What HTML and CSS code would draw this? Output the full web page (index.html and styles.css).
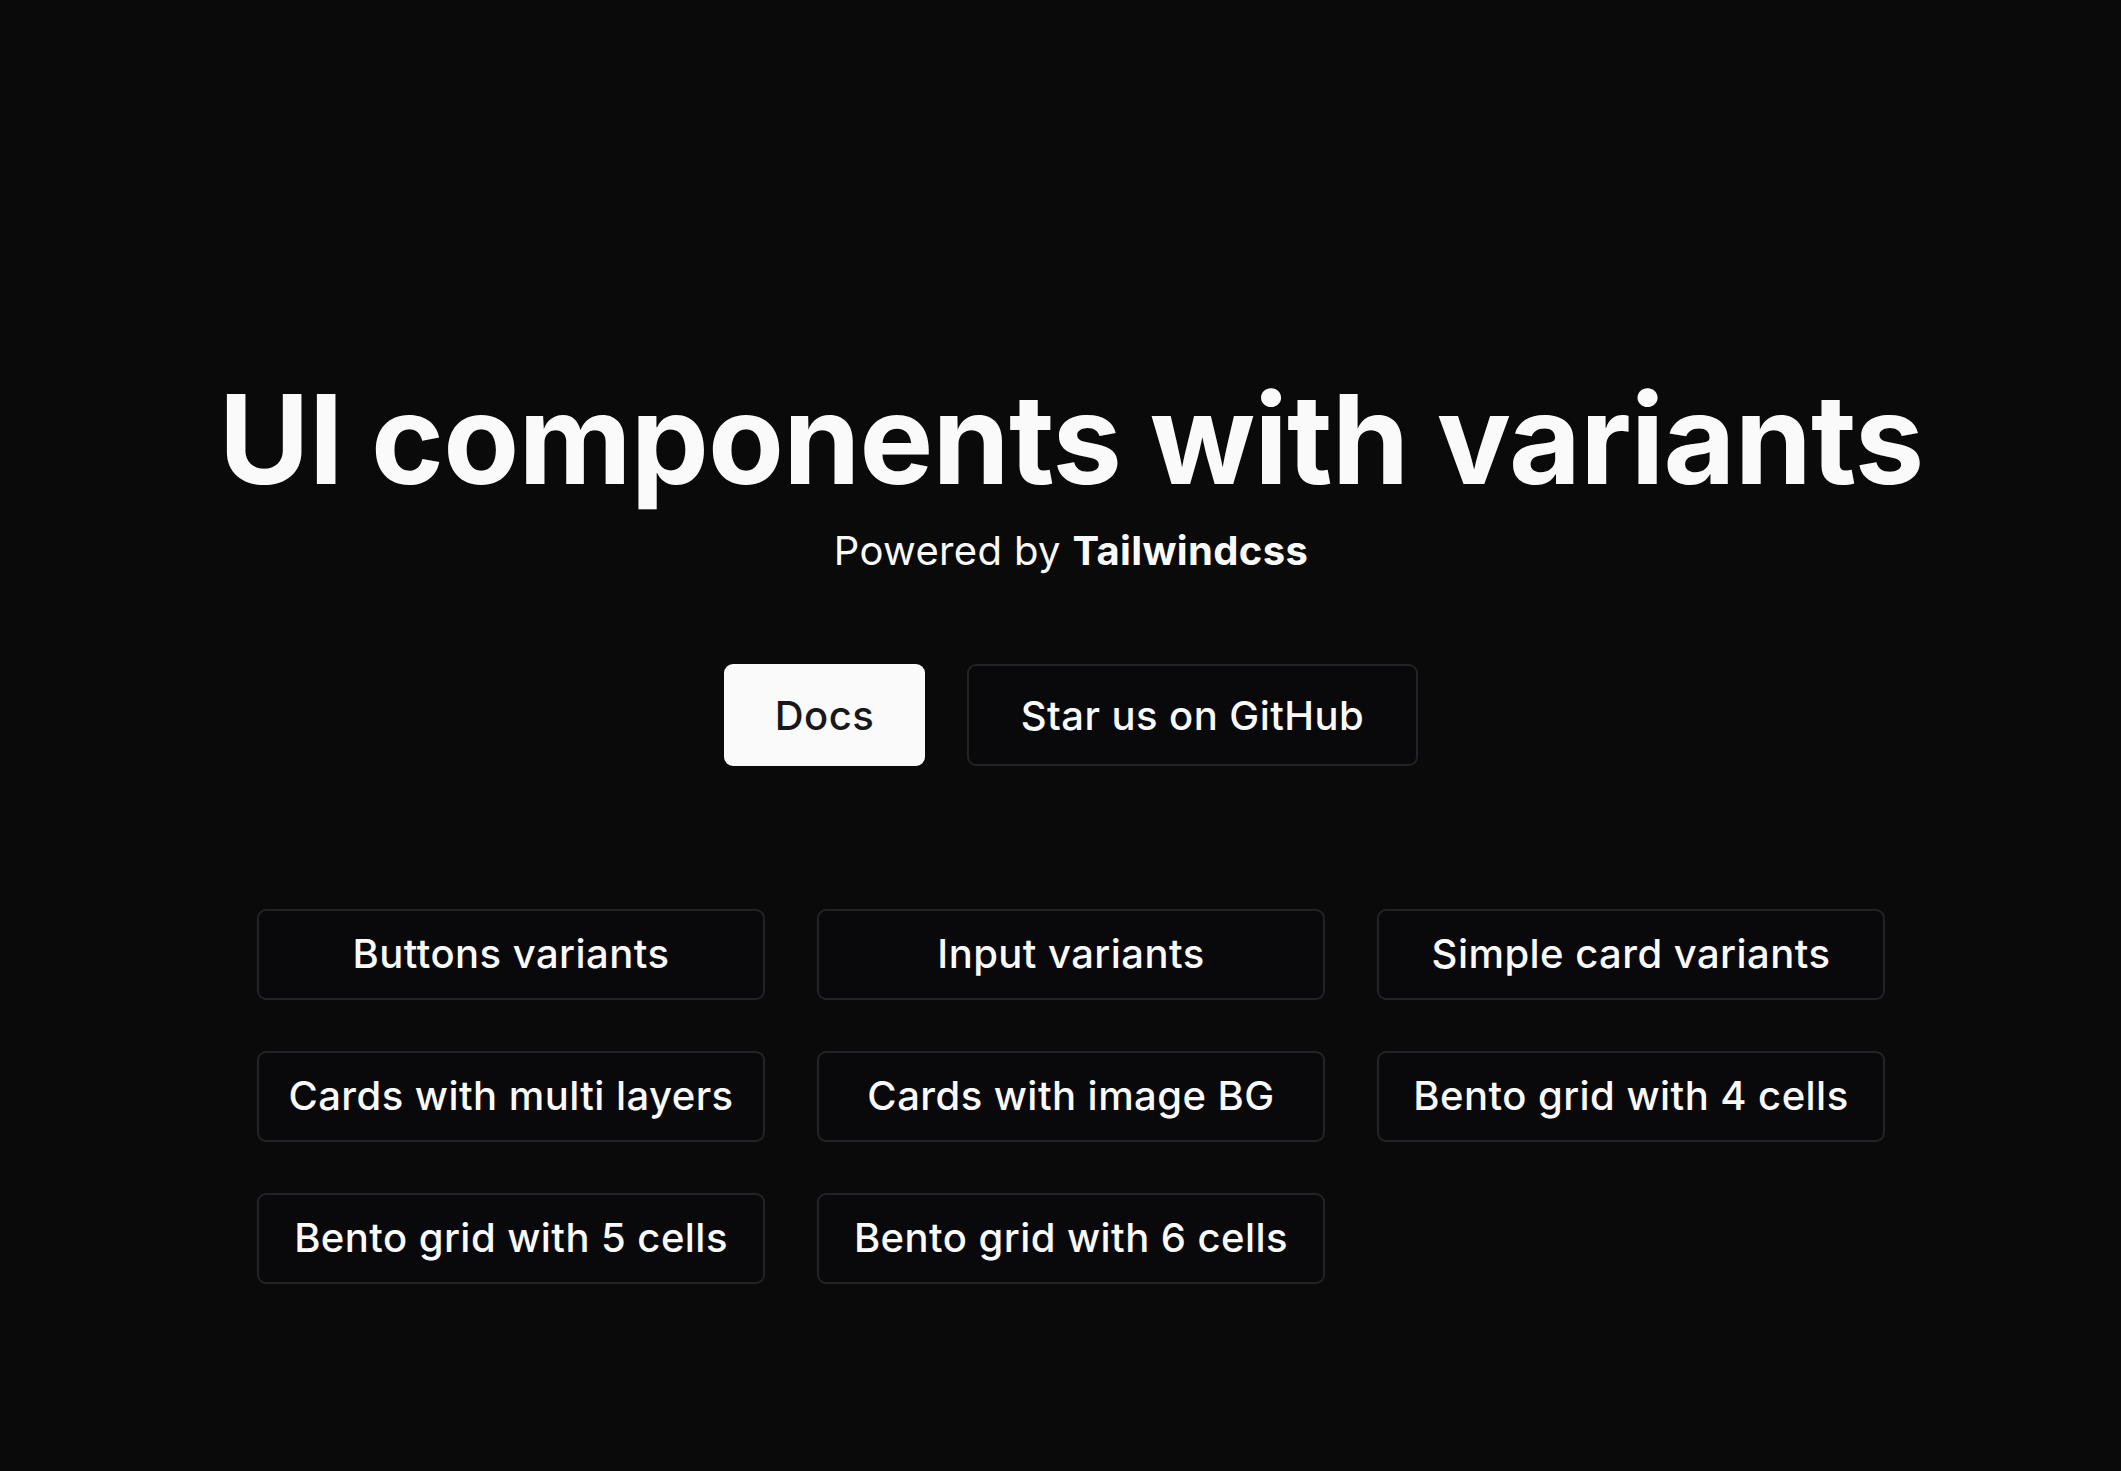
FILE: index.html
```html
<!DOCTYPE html>
<html lang="en">
<head>
<meta charset="utf-8">
<title>UI components with variants</title>
<link rel="stylesheet" href="styles.css">
</head>
<body>
<main class="hero">
  <h1 class="title">UI components with variants</h1>
  <p class="subtitle">Powered by <strong>Tailwindcss</strong></p>
  <div class="actions">
    <a class="btn btn-primary" href="#">Docs</a>
    <a class="btn btn-outline" href="#">Star us on GitHub</a>
  </div>
  <nav class="grid">
    <a class="card" href="#">Buttons variants</a>
    <a class="card" href="#">Input variants</a>
    <a class="card" href="#">Simple card variants</a>
    <a class="card" href="#">Cards with multi layers</a>
    <a class="card" href="#">Cards with image BG</a>
    <a class="card" href="#">Bento grid with 4 cells</a>
    <a class="card" href="#">Bento grid with 5 cells</a>
    <a class="card" href="#">Bento grid with 6 cells</a>
  </nav>
</main>
</body>
</html>
```

FILE: styles.css
```css
html, body {
  margin: 0;
  padding: 0;
  background: #0a0a0a;
  color: #fafafa;
  font-family: Inter, "Noto Sans", "Liberation Sans", sans-serif;
}

.hero {
  min-height: 100vh;
  box-sizing: border-box;
  display: flex;
  flex-direction: column;
  align-items: center;
  padding-top: 377px;
  padding-left: 21px;
}

.title {
  margin: 0;
  font-size: 124px;
  line-height: 124px;
  font-weight: 700;
  letter-spacing: -0.85px;
  color: #fafafa;
}

.subtitle {
  margin: 20px 0 0;
  font-size: 40px;
  line-height: 60px;
  font-weight: 400;
  letter-spacing: 0.35px;
  color: #fafafa;
}

.subtitle strong {
  font-weight: 700;
}

.actions {
  margin-top: 83px;
  display: flex;
  gap: 42px;
}

.btn {
  display: flex;
  align-items: center;
  justify-content: center;
  height: 102px;
  box-sizing: border-box;
  border-radius: 9px;
  font-size: 40px;
  font-weight: 500;
  letter-spacing: 0.45px;
  text-decoration: none;
}

.btn-primary {
  width: 201px;
  background: #fafafa;
  color: #18181b;
}

.btn-outline {
  width: 451px;
  background: #09090b;
  color: #fafafa;
  border: 2px solid #232325;
}

.grid {
  margin-top: 143px;
  display: grid;
  grid-template-columns: repeat(3, 508px);
  column-gap: 52px;
  row-gap: 51px;
}

.card {
  height: 91px;
  box-sizing: border-box;
  padding-bottom: 3px;
  display: flex;
  align-items: center;
  justify-content: center;
  border: 2px solid #232325;
  border-radius: 9px;
  background: #09090b;
  color: #fafafa;
  font-size: 40px;
  font-weight: 500;
  letter-spacing: 0.45px;
  text-decoration: none;
}
```
